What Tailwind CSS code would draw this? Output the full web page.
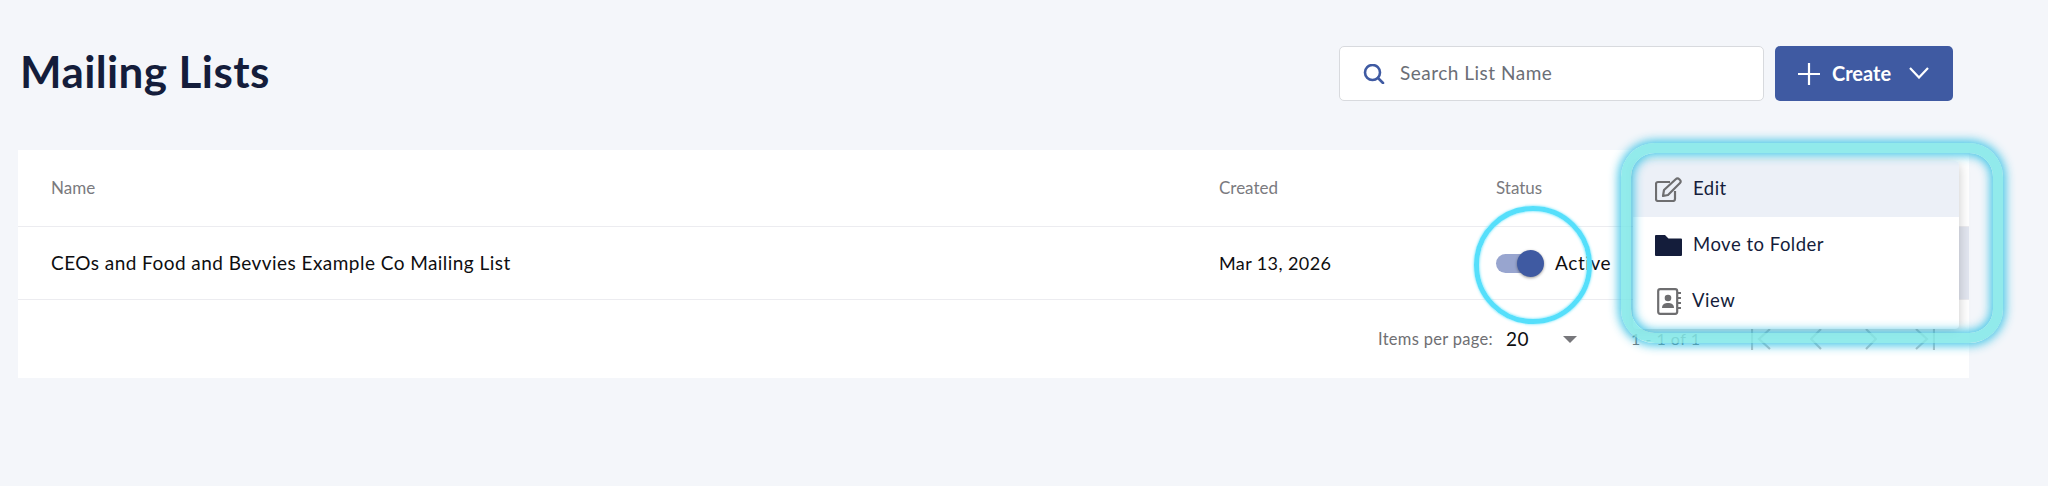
<!DOCTYPE html>
<html lang="en">
<head>
  <meta charset="UTF-8" />
  <title>Mailing Lists</title>
  <script src="https://cdn.jsdelivr.net/npm/@tailwindcss/browser@4"></script>
</head>
<body class="bg-[#f4f6fa] font-['Lato',sans-serif] text-[#141d3b] overflow-hidden">
  <div class="relative h-[486px] w-[2048px]">

    <!-- Page header -->
    <header class="flex items-center justify-between pl-[20px] pr-[95px] pt-[46px]">
      <h1 class="text-[44px] font-bold leading-[55px] tracking-[0.4px] -mt-[5px]">Mailing Lists</h1>
      <div class="flex gap-[11px]">
        <div class="flex h-[55px] w-[425px] items-center rounded-[5px] border border-[#d8dade] bg-white pl-[23px]">
          <svg class="h-[20px] w-[22px]" viewBox="0 0 22 20" fill="none" stroke="#3f5aa2" stroke-width="2.6" stroke-linecap="round"><circle cx="9.5" cy="8.5" r="7.5"/><path d="M15 14l5 5"/></svg>
          <span class="ml-[15px] text-[19px] text-[#6b6e76] tracking-[0.5px]">Search List Name</span>
        </div>
        <button class="flex h-[55px] w-[178px] items-center rounded-[5px] bg-[#3f5aa2] pl-[23px] text-white">
          <svg class="h-[22px] w-[22px]" viewBox="0 0 22 22" stroke="#fff" stroke-width="2.2"><path d="M11 0v22M0 11h22"/></svg>
          <span class="ml-[12px] text-[20px] font-bold -mt-[2px]">Create</span>
          <svg class="ml-[18px] -mt-[2px] h-[12px] w-[20px]" viewBox="0 0 20 12" fill="none" stroke="#fff" stroke-width="2.2"><path d="M1 1l9 9.5L19 1"/></svg>
        </button>
      </div>
    </header>

    <!-- Table card -->
    <section class="ml-[18px] mt-[49px] w-[1951px] bg-white">
      <div class="grid h-[77px] grid-cols-[1168px_277px_1fr] items-center border-b border-[#ececf0] pl-[33px] pb-[1px] text-[17px] text-[#7a7a7e]">
        <span>Name</span>
        <span>Created</span>
        <span>Status</span>
      </div>
      <div class="grid h-[73px] grid-cols-[1168px_277px_1fr] items-center border-b border-[#ececf0] pl-[33px] text-[19px] text-[#0e0e10]">
        <span class="tracking-[0.45px]">CEOs and Food and Bevvies Example Co Mailing List</span>
        <span class="text-[18px] tracking-[0.4px]">Mar 13, 2026</span>
        <div class="flex h-full items-center justify-between">
          <div class="flex items-center">
            <div class="relative h-[19px] w-[44px] rounded-full bg-[#98a5cf]">
              <div class="absolute -top-[4px] left-[21px] h-[27px] w-[27px] rounded-full bg-[#3f5aa2] shadow-[0_1px_3px_rgba(0,0,0,0.4)]"></div>
            </div>
            <span class="ml-[15px] tracking-[0.6px]">Active</span>
          </div>
          <div class="h-full w-[60px] bg-[#e2e6f0]"></div>
        </div>
      </div>
      <div class="flex h-[78px] items-center pl-[1360px]">
        <span class="text-[16.5px] text-[#6f6f73] tracking-[0.3px]">Items per page:</span>
        <span class="ml-[13px] text-[19px] text-[#0e0e10] tracking-[0.5px]">20</span>
        <span class="ml-[34px] h-0 w-0 border-x-[7px] border-t-[7px] border-x-transparent border-t-[#77777b]"></span>
        <span class="ml-[54px] text-[16px] text-[#6f6f73] tracking-[0.5px]">1 - 1 of 1</span>
        <svg class="ml-[51px] h-[22px] w-[20px]" viewBox="0 0 20 22" fill="none" stroke="#000" stroke-opacity=".26" stroke-width="2.2"><path d="M1 0v22M19 1L8 11l11 10"/></svg>
        <svg class="ml-[39px] h-[22px] w-[12px]" viewBox="0 0 12 22" fill="none" stroke="#000" stroke-opacity=".26" stroke-width="2.2"><path d="M11 1L1 11l10 10"/></svg>
        <svg class="ml-[43px] h-[22px] w-[12px]" viewBox="0 0 12 22" fill="none" stroke="#000" stroke-opacity=".26" stroke-width="2.2"><path d="M1 1l10 10L1 21"/></svg>
        <svg class="ml-[38px] h-[22px] w-[20px]" viewBox="0 0 20 22" fill="none" stroke="#000" stroke-opacity=".26" stroke-width="2.2"><path d="M19 0v22M1 1l11 10L1 21"/></svg>
      </div>
    </section>

    <!-- Row action menu -->
    <div class="absolute left-[1633px] top-[161px] w-[326px] overflow-hidden rounded-[4px] bg-white text-[18.5px] shadow-[0_3px_12px_rgba(0,0,0,0.22)]">
      <div class="flex h-[56px] items-center bg-[#ecf0f7] pl-[22px] tracking-[0.5px]">
        <svg class="h-[25px] w-[27px]" viewBox="0 0 27 25" fill="none" stroke="#6e6e70" stroke-width="2.2" stroke-linejoin="round"><path d="M15 5H3a2 2 0 0 0-2 2v15a2 2 0 0 0 2 2h15a2 2 0 0 0 2-2V14"/><path d="M9 13L21 2a2 2 0 0 1 3 0l1 1a2 2 0 0 1 0 3L13 18l-5 1z"/></svg>
        <span class="ml-[11px] -mt-[1px]">Edit</span>
      </div>
      <div class="flex h-[56px] items-center pl-[22px] tracking-[0.5px]">
        <svg class="h-[21px] w-[27px]" viewBox="0 0 27 21" fill="#141d3b"><path d="M1 0h9l3.5 3.5H26a1 1 0 0 1 1 1V20a1 1 0 0 1-1 1H1a1 1 0 0 1-1-1V1a1 1 0 0 1 1-1z"/></svg>
        <span class="ml-[11px] -mt-[1px]">Move to Folder</span>
      </div>
      <div class="flex h-[56px] items-center pl-[24px] tracking-[0.5px]">
        <svg class="h-[27px] w-[24px]" viewBox="0 0 24 27"><rect x="1.2" y="1.2" width="19" height="24.6" rx="2" fill="none" stroke="#6e6e70" stroke-width="2.2"/><path d="M21 5h3M21 10h3M21 15h3M21 20h3" stroke="#6e6e70" stroke-width="2"/><circle cx="11" cy="10" r="3.3" fill="#6e6e70"/><path d="M5 20c0-4 3-5 6-5s6 1 6 5z" fill="#6e6e70"/></svg>
        <span class="ml-[11px] -mt-[1px]">View</span>
      </div>
    </div>

    <!-- Highlight rings -->
    <div class="absolute left-[1474px] top-[206px] h-[118px] w-[118px] rounded-full border-[5px] border-[#55dffb] shadow-[0_0_3px_#55dffb,inset_0_0_3px_#55dffb]"></div>
    <div class="absolute left-[1621px] top-[143px] h-[200px] w-[382px] rounded-[34px] border-[10px] border-[#7fe8e8]/85 shadow-[0_0_10px_3px_rgba(60,195,230,0.9),inset_0_0_10px_3px_rgba(60,195,230,0.9)]"></div>
  </div>
</body>
</html>
